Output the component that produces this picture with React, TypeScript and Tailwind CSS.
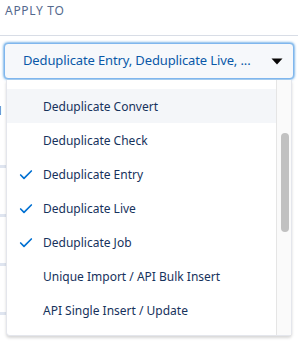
import { Check } from "lucide-react";

const options = [
  { label: "Deduplicate Convert", checked: false, active: true },
  { label: "Deduplicate Check", checked: false },
  { label: "Deduplicate Entry", checked: true },
  { label: "Deduplicate Live", checked: true },
  { label: "Deduplicate Job", checked: true },
  { label: "Unique Import / API Bulk Insert", checked: false },
  { label: "API Single Insert / Update", checked: false },
];

export default function App() {
  return (
    <div className="relative w-[298px] h-[342px] overflow-hidden bg-white font-['Noto_Sans',sans-serif] text-[13px] text-[#16325c]">
      {/* section header */}
      <div className="h-[36px] border-b border-[#d8dde6] pl-[5px] pt-[1px]">
        <span className="text-[12px] tracking-[0.06em] text-[#54698d]">APPLY TO</span>
      </div>

      {/* combobox */}
      <div className="px-[4px] pt-[7px]">
        <div className="flex h-[36px] items-center justify-between rounded-[4px] border border-[#7fb6ee] bg-[#f6f8fb] pl-[18px] pr-[10px] shadow-[0_0_3px_#0070d2]">
          <span className="text-[13px] tracking-[-0.01em] text-[#0a58a8]">Deduplicate Entry, Deduplicate Live, ...</span>
          <svg width="12" height="7" viewBox="0 0 12 7">
            <path d="M0.5 0.5 H11.5 L6 6.5 Z" fill="#080707" />
          </svg>
        </div>
      </div>

      {/* content behind the menu */}
      <div className="flex flex-col pt-[22px]">
        <span className="-ml-[8px] text-[13px] text-[#54698d]">N</span>
        <div className="mt-[44px] flex flex-col gap-[46px]">
          <div className="h-[3px] w-[6px] bg-[#dfe5f0]" />
          <div className="h-[3px] w-[6px] bg-[#dfe5f0]" />
          <div className="h-[3px] w-[6px] bg-[#dfe5f0]" />
          <div className="h-[3px] w-[6px] bg-[#dfe5f0]" />
        </div>
      </div>

      {/* dropdown menu */}
      <div className="absolute left-[6px] top-[80px] flex h-[256px] w-[286px] rounded-b-[4px] border border-t-0 border-[#e4e6ec] bg-white shadow-[0_2px_3px_rgba(0,0,0,0.16)]">
        <ul className="flex-1 pt-[9px]">
          {options.map((o) => (
            <li
              key={o.label}
              className={`flex h-[34px] items-center ${o.active ? "bg-[#f4f6f9]" : ""}`}
            >
              <span className="flex w-[36px] justify-center pl-[1px] pt-[1px]">
                {o.checked && <Check size={16} strokeWidth={2.5} className="text-[#0070d2]" />}
              </span>
              <span className="pt-[2px] text-[12px]">{o.label}</span>
            </li>
          ))}
        </ul>
        <div className="relative w-[15px] border-l border-[#e5e5e5] bg-[#fafafa]">
          <div className="absolute left-[4px] top-[53px] h-[99px] w-[8px] rounded-[4px] bg-[#c1c1c1]" />
        </div>
      </div>
    </div>
  );
}
